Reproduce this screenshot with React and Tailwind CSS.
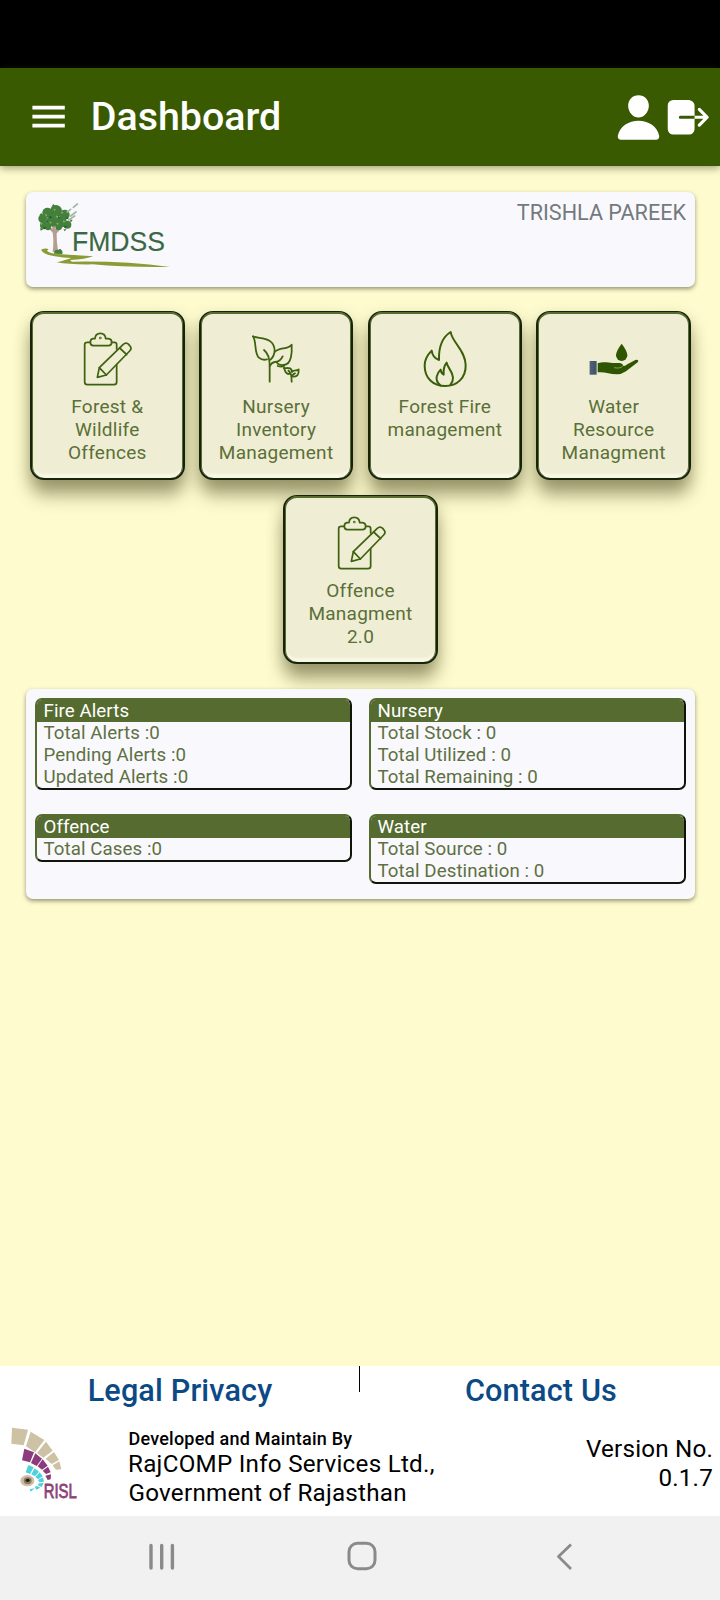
import React from "react";
import { IoPerson, IoLogOut } from "react-icons/io5";

function ClipboardIcon() {
  return (
    <svg viewBox="0 0 162 162" className="size-[54px] overflow-visible" fill="none" stroke="#3f6210" strokeWidth="5.2" strokeLinejoin="round" strokeLinecap="round">
      <path d="M30 31H22Q14 31 14 38V150Q14 158 22 158H102Q110 158 110 150V98" />
      <path d="M95 31H103Q110 31 110 38V51" />
      <path d="M39 20H45Q46 4 61 4Q76 4 77 20H85Q95 21 95 30Q95 41 85 41H40Q31 41 31 31Q31 21 39 20Z" />
      <circle cx="61" cy="18" r="1.2" />
      <path d="M52 136L58 107L129 38Q138 29 147 38L149 41Q157 49 149 57L79 129Z" />
      <path d="M58 107L79 129M119 48L140 68" />
    </svg>
  );
}

function PlantIcon() {
  return (
    <svg viewBox="0 0 162 162" className="size-[54px] overflow-visible" fill="none" stroke="#3f6210" strokeWidth="5.4" strokeLinejoin="round" strokeLinecap="round">
      <path d="M12 13C28 22 76 12 77 56Q76 72 65 83" />
      <path d="M12 13C23 26 15 66 30 77Q40 86 54 82" />
      <path d="M45 54Q62 68 62 100V149" />
      <path d="M78 59C92 44 116 54 128 38C129 58 129 98 104 99Q88 100 84 92" />
      <path d="M62 102Q69 91 77 90Q94 89 101 73" />
      <path d="M105 108C115 109 128 104 129 120C137 111 143 119 149 112C150 127 144 136 132 133" />
      <path d="M105 108C109 116 108 126 120 126M118 116Q128 121 128 149M128 136Q131 126 138 124" />
      <path d="M86 102Q98 106 106 101" />
    </svg>
  );
}

function FlameIcon() {
  return (
    <svg viewBox="0 0 162 162" className="size-[54px] overflow-visible" fill="none" stroke="#3b5e0a" strokeWidth="6" strokeLinejoin="round" strokeLinecap="round">
      <path d="M98 0C101 29 142 55 143 99C144 138 117 162 82 162C45 162 20 138 20 101C20 83 31 66 41 56C43 71 51 80 63 84C62 50 72 16 98 0Z" />
      <path d="M67 160C46 142 59 122 68 113Q69 124 77 128Q75 106 86 92C89 109 104 117 105 137Q105 150 97 159" />
    </svg>
  );
}

function WaterHandIcon() {
  return (
    <svg viewBox="0 0 162 162" className="-ml-[1px] size-[54px] overflow-visible">
      <path d="M11 87H32V128H11Z" fill="#43566b" />
      <path d="M13 89V127M18 90V127" stroke="#8591a0" strokeWidth="2" strokeDasharray="2 4" />
      <path d="M35 94C53 88 66 92 80 93H101Q112 96 112 102Q118 103 124 97L148 84Q159 82 156 90L120 118Q105 128 92 127C70 126 57 119 35 121Z" fill="#2f5500" />
      <path d="M84 107Q104 111 111 101" fill="none" stroke="#dfe2c0" strokeWidth="1.5" />
      <path d="M107 35Q124 57 124 70A17 17 0 0 1 90 70Q90 57 107 35Z" fill="#2f5500" />
    </svg>
  );
}

function FmdssLogo() {
  return (
    <svg viewBox="0 0 450 234" className="h-[78px] w-[150px]">
      <path d="M80 180Q84 146 80 122L60 100L66 96L79 110V84H89L88 112L110 94L116 100L92 124Q91 150 97 182Z" fill="#b59d90" />
      <g fill="#44803c">
        <circle cx="50" cy="80" r="13" />
        <circle cx="64" cy="62" r="15" />
        <circle cx="90" cy="57" r="18" />
        <circle cx="116" cy="68" r="15" />
        <circle cx="54" cy="100" r="12" />
        <circle cx="80" cy="86" r="18" />
        <circle cx="106" cy="90" r="16" />
        <circle cx="124" cy="98" r="12" />
        <circle cx="98" cy="104" r="10" />
        <circle cx="66" cy="106" r="9" />
        <path d="M40 70l6-8 4 8zM132 82l8 2-6 8zM76 44l6-8 6 6zM42 108l2 8 8-4zM112 112l4 6 6-6z" />
        <path d="M84 185Q86 170 96 174Q106 166 110 182L108 186Z" />
      </g>
      <g fill="#7bb067">
        <path d="M56 66l8 2-4 7zM82 50l8 2-5 6zM106 58l7 4-7 4zM70 88l8 3-6 5zM112 84l7 5-8 3zM44 92l7 2-5 6zM90 94l8-2-2 8zM90 70l6 4-7 3z" />
      </g>
      <g fill="#235c2b">
        <path d="M70 72l8 2-5 7zM98 70l6 8-9 1zM52 104l9 2-6 6zM122 74l6 6-8 2zM116 100l8 4-8 4zM62 84l6 6-8 1z" />
      </g>
      <path d="M124 60L134 52M134 72L150 60M128 84L146 72M142 46L154 36" stroke="#a3b8a0" strokeWidth="5" strokeLinecap="round" />
      <path d="M45 173Q60 166 68 172Q54 180 86 185Q150 189 202 193Q178 202 132 204L138 209Q290 206 432 225Q300 227 200 217Q130 218 92 211Q120 204 136 198Q54 194 45 173Z" fill="#8a9c33" />
      <text x="138" y="176" fontFamily="Liberation Sans, Arial, sans-serif" fontSize="84" fill="#3a6843" stroke="#3a6843" strokeWidth="0.5" textLength="279" lengthAdjust="spacingAndGlyphs">FMDSS</text>
    </svg>
  );
}

function RislLogo() {
  return (
    <svg viewBox="0 0 270 237" className="h-[79px] w-[90px]">
      <g transform="translate(0 -30)">
        <path fill="#cdc2a3" d="M36 38L84 44L71 91L34 86ZM92 50L133 75L105 112L78 94ZM138 80L158 107L130 128L111 114ZM162 111L177 135L155 147L137 131ZM178 139L184 163L168 164L158 151Z" />
        <path fill="#8c3c7c" d="M73 101L102 112L90 142L66 136ZM106 115L126 131L110 153L93 144ZM128 133L143 152L126 164L113 154ZM144 155L152 172L138 177L128 167ZM153 178L152 193L143 195L136 182Z" />
        <path fill="#4fd0dc" d="M85 150L101 157L90 177L77 172ZM104 160L117 170L105 184L94 178ZM119 172L128 184L115 193L106 186ZM129 187L132 200L118 202L114 195ZM131 204L125 216L113 211L117 205ZM121 218L109 224L104 215L112 213ZM104 220L92 230L89 223Z" />
        <ellipse cx="82" cy="197" rx="21" ry="17" fill="#cdbfa6" />
        <ellipse cx="83" cy="197" rx="12" ry="10" fill="#8a7b66" />
        <ellipse cx="83" cy="196" rx="6" ry="5" fill="#1f1915" />
        <text x="131" y="248" fontFamily="Liberation Sans, Arial, sans-serif" fontSize="60" fill="#8b4478" stroke="#8b4478" strokeWidth="2.5" textLength="99" lengthAdjust="spacingAndGlyphs">RISL</text>
      </g>
    </svg>
  );
}

const tiles = [
  { icon: ClipboardIcon, lines: ["Forest &", "Wildlife", "Offences"] },
  { icon: PlantIcon, lines: ["Nursery", "Inventory", "Management"] },
  { icon: FlameIcon, lines: ["Forest Fire", "management"] },
  { icon: WaterHandIcon, lines: ["Water", "Resource", "Managment"] },
  { icon: ClipboardIcon, lines: ["Offence", "Managment", "2.0"] },
];

function Tile({ icon: Icon, lines }) {
  return (
    <button className="flex h-[169px] w-[154.5px] flex-col items-center rounded-[14px] border-2 border-t-1 border-[#18240a] bg-[#efeed4] pt-5 shadow-[0_17px_18px_-2px_rgba(70,70,25,0.44),0_6px_16px_rgba(70,70,25,0.26),inset_0_2px_0_#556b2f,inset_1px_0_0_#556b2f,inset_-1px_0_0_#556b2f,inset_0_-4px_2px_#f8f7e6]">
      <Icon />
      <span className="mt-[9px] flex flex-col text-center text-[19px] leading-[23px] tracking-[0.26px] text-[#5b6f38]">
        {lines.map((line) => (
          <span key={line}>{line}</span>
        ))}
      </span>
    </button>
  );
}

function StatBox({ title, rows }) {
  return (
    <section className="self-start overflow-hidden rounded-[7px] border-2 border-t-[#556b2f] border-r-[#10150a] border-b-[#10150a] border-l-[#556b2f] text-[18.7px] leading-[22px] tracking-[0.08px]">
      <h2 className="bg-[#556b2f] pl-[6.5px] text-white">{title}</h2>
      {rows.map((row) => (
        <p key={row} className="pl-[6.5px] text-[#5f7042]">{row}</p>
      ))}
    </section>
  );
}

export default function App() {
  return (
    <div className="flex h-[1600px] w-[720px] flex-col overflow-hidden bg-[#fefbcf] font-['Roboto',sans-serif]">
      <div className="h-[68px] shrink-0 bg-black" />
      <header className="z-10 flex h-[98px] shrink-0 items-center bg-[#3a5a02] pr-[6.5px] pl-[27px] text-white shadow-[0_2px_8px_rgba(60,60,20,0.5)]">
        <svg viewBox="0 0 24 24" className="size-[43.2px]" fill="currentColor">
          <path d="M3 6h18v2H3zM3 11h18v2H3zM3 16h18v2H3z" />
        </svg>
        <h1 className="ml-[20.5px] flex-1 text-[39.4px] leading-[46px] font-medium">Dashboard</h1>
        <IoPerson className="size-[51px]" />
        <IoLogOut className="-ml-[0.5px] size-[50.5px]" />
      </header>

      <main className="flex flex-1 flex-col pt-[26px]">
        <section className="mx-[26px] flex h-[95px] w-[669px] items-start justify-between rounded-[7px] bg-[#f9f9fd] pr-[9px] shadow-[0_2px_4px_rgba(50,50,20,0.5)]">
          <FmdssLogo />
          <span className="mt-[8px] text-[21.6px] leading-[26px] text-[#73797d]">TRISHLA PAREEK</span>
        </section>

        <section className="mx-[26px] mt-6 flex w-[669px] flex-wrap justify-center gap-x-[14.3px] gap-y-[15px]">
          {tiles.map((tile) => (
            <Tile key={tile.lines.join(" ")} {...tile} />
          ))}
        </section>

        <section className="z-10 mx-[26px] mt-[25px] grid h-[210px] w-[669px] grid-cols-2 content-start gap-x-[17px] gap-y-6 rounded-[7px] bg-[#f9f9fd] px-[9px] pt-[9px] shadow-[0_2px_4px_rgba(50,50,20,0.5)]">
          <StatBox title="Fire Alerts" rows={["Total Alerts :0", "Pending Alerts :0", "Updated Alerts :0"]} />
          <StatBox title="Nursery" rows={["Total Stock : 0", "Total Utilized : 0", "Total Remaining : 0"]} />
          <StatBox title="Offence" rows={["Total Cases :0"]} />
          <StatBox title="Water" rows={["Total Source : 0", "Total Destination : 0"]} />
        </section>
      </main>

      <footer className="h-[150px] shrink-0 bg-white text-black">
        <div className="flex pl-[1px] text-center text-[30.6px] leading-[36px] font-medium tracking-[0.15px] text-[#0c4a86]">
          <span className="flex-1 pt-[7px]">Legal Privacy</span>
          <span className="h-[26px] w-px bg-black" />
          <span className="flex-1 pt-[7px] pl-[2px]">Contact Us</span>
        </div>
        <div className="-mt-px flex pr-[7px]">
          <div className="mt-[17px] w-[128.5px]">
            <RislLogo />
          </div>
          <div className="flex-1 pt-[20px]">
            <p className="text-[18px] leading-[22px] font-medium tracking-[0.22px]">Developed and Maintain By</p>
            <p className="-ml-[0.5px] text-[24.2px] leading-[29px] tracking-[0.26px]">RajCOMP Info Services Ltd.,</p>
            <p className="text-[24.2px] leading-[29px] tracking-[0.24px]">Government of Rajasthan</p>
          </div>
          <div className="pt-[27px] text-right text-[24.2px] leading-[29px] tracking-[0.2px]">
            <p>Version No.</p>
            <p>0.1.7</p>
          </div>
        </div>
      </footer>

      <nav className="flex h-[84px] shrink-0 items-center justify-between bg-[#f1f1f1] pr-[141px] pl-[146.5px]">
        <svg viewBox="0 0 30 30" className="-mt-[5px] size-[30px]" stroke="#8a8a8a" strokeWidth="3.4" strokeLinecap="round">
          <path d="M4 4.5V27M14.7 4.5V27M25.4 4.5V27" />
        </svg>
        <svg viewBox="0 0 30 30" className="-mt-[5px] -ml-[1px] size-[30px]" fill="none" stroke="#8a8a8a" strokeWidth="3">
          <rect x="2" y="2.3" width="26" height="25.5" rx="8.5" />
        </svg>
        <svg viewBox="0 0 30 30" className="-mt-[5px] size-[30px]" fill="none" stroke="#8a8a8a" strokeWidth="2.8" strokeLinejoin="round">
          <path d="M22 3.5L9.5 15.5L22 28" />
        </svg>
      </nav>
    </div>
  );
}
